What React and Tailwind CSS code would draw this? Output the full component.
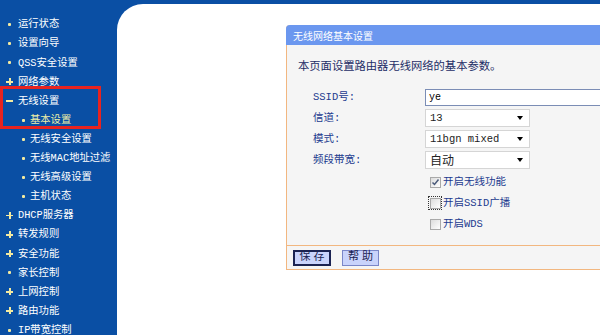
import React from 'react';

const menu = [
  { label: '运行状态', mark: 'dot' },
  { label: '设置向导', mark: 'dot' },
  { label: 'QSS安全设置', mark: 'dot' },
  { label: '网络参数', mark: 'plus' },
  { label: '无线设置', mark: 'minus' },
  { label: '基本设置', mark: 'dot', sub: true, active: true },
  { label: '无线安全设置', mark: 'dot', sub: true },
  { label: '无线MAC地址过滤', mark: 'dot', sub: true },
  { label: '无线高级设置', mark: 'dot', sub: true },
  { label: '主机状态', mark: 'dot', sub: true },
  { label: 'DHCP服务器', mark: 'plus' },
  { label: '转发规则', mark: 'plus' },
  { label: '安全功能', mark: 'plus' },
  { label: '家长控制', mark: 'dot' },
  { label: '上网控制', mark: 'plus' },
  { label: '路由功能', mark: 'plus' },
  { label: 'IP带宽控制', mark: 'dot' },
];

const Mark = ({ type }) => {
  if (type === 'plus')
    return (
      <span className="relative w-[7px] h-[7px] shrink-0">
        <span className="absolute left-0 top-[3px] w-[7px] h-[1.5px] bg-[#f3eaa0]" />
        <span className="absolute left-[3px] top-0 w-[1.5px] h-[7px] bg-[#f3eaa0]" />
      </span>
    );
  if (type === 'minus')
    return <span className="w-[7px] h-[2px] bg-[#f3eaa0] shrink-0" />;
  return <span className="w-[3px] h-[3px] mx-[2px] rounded-[1px] bg-[#f3eaa0] shrink-0" />;
};

const Select = ({ value }) => (
  <div className="w-[105px] h-[18px] bg-white border border-[#d5d5d5] flex items-center justify-between pl-[4px] pr-[6px]">
    <span className="text-[10.5px] text-[#222]">{value}</span>
    <span className="w-0 h-0 border-l-[3.5px] border-r-[3.5px] border-t-[4px] border-l-transparent border-r-transparent border-t-black" />
  </div>
);

const Check = ({ checked, focus, label }) => (
  <div className="flex items-center h-[21px]">
    <span className={`flex items-center justify-center w-[14px] h-[14px] ${focus ? 'outline outline-1 outline-dotted outline-[#333] -outline-offset-1' : ''}`}>
      <span className="w-[11px] h-[11px] border border-[#a9a9a9] bg-gradient-to-br from-[#dcdcdc] to-white flex items-center justify-center">
        {checked && (
          <svg width="9" height="9" viewBox="0 0 9 9">
            <path d="M1.5 4.5 L3.5 6.5 L7.5 1.5" fill="none" stroke="#4a5a7a" strokeWidth="1.5" />
          </svg>
        )}
      </span>
    </span>
    <span className="ml-[1px] text-[10.5px] text-[#1c3b8f]">{label}</span>
  </div>
);

export default function App() {
  return (
    <div
      className="w-[600px] h-[335px] overflow-hidden flex bg-[#0a4fa4]"
      style={{ fontFamily: '"Liberation Mono", "Noto Sans CJK SC", monospace' }}
    >
      <div className="relative w-[117px] shrink-0 pt-[15px]">
        {menu.map((m) => (
          <div
            key={m.label}
            className={`flex items-center h-[19.1px] ${m.sub ? 'pl-[20px] gap-[3px]' : 'pl-[6px] gap-[5px]'}`}
          >
            <Mark type={m.mark} />
            <span
              className={`text-[10.3px] leading-none whitespace-nowrap ${m.active ? 'text-[#eef0a8]' : 'text-white'}`}
            >
              {m.label}
            </span>
          </div>
        ))}
        <div className="absolute left-0 top-[86px] w-[101px] h-[43px] border-[3px] border-[#e8231f]" />
      </div>

      <div className="flex-1 mt-[4px] bg-white rounded-tl-[26px] pl-[169px] pt-[21px]">
        <div className="w-[340px] h-[245px] border border-[#f2b780] border-t-0 rounded-tl-[4px] bg-[#f5f5f5] flex flex-col">
          <div
            className="h-[20px] -mx-px bg-[#6b97ef] rounded-tl-[4px] flex items-center pl-[7px] text-[10px] text-white"
            style={{ fontFamily: '"Noto Sans CJK SC", sans-serif' }}
          >
            无线网络基本设置
          </div>
          <div className="h-[200px] flex flex-col">
            <div
              className="pl-[11px] pt-[12px] text-[11.3px] text-[#1d2d66]"
              style={{ fontFamily: '"Noto Sans CJK SC", sans-serif' }}
            >
              本页面设置路由器无线网络的基本参数。
            </div>
            <div className="flex mt-[13px] pl-[26px]">
              <div className="w-[118px] flex flex-col text-[10.5px] text-[#1c3b8f]">
                <div className="h-[21px] flex items-center">SSID号:</div>
                <div className="h-[21px] flex items-center">信道:</div>
                <div className="h-[21px] flex items-center">模式:</div>
                <div className="h-[21px] flex items-center">频段带宽:</div>
              </div>
              <div className="flex flex-col">
                <div className="h-[21px] flex items-center">
                  <div className="w-[200px] h-[17px] bg-white border border-[#7b8db5] flex items-center pl-[3px] text-[10px] text-black">
                    ye
                  </div>
                </div>
                <div className="h-[21px] flex items-center"><Select value="13" /></div>
                <div className="h-[21px] flex items-center"><Select value="11bgn mixed" /></div>
                <div className="h-[21px] flex items-center">
                  <Select value={<span className="text-[12px]" style={{ fontFamily: '"Noto Sans CJK SC", sans-serif' }}>自动</span>} />
                </div>
                <div className="pl-[3px] mt-[1px]">
                  <Check checked label="开启无线功能" />
                  <Check focus label="开启SSID广播" />
                  <Check label="开启WDS" />
                </div>
              </div>
            </div>
          </div>
          <div className="h-[24px] border-t border-[#f2b780] flex items-center pl-[6px] gap-[11px]">
            <button className="w-[38px] h-[16px] bg-[#c9d3fb] border-2 border-[#1b2352] text-[11px] leading-none text-[#1b2352] tracking-[3px] pl-[3px]">
              保存
            </button>
            <button className="w-[37px] h-[16px] bg-[#c9d3fb] border border-[#7a86c8] text-[11px] leading-none text-[#1b2352] tracking-[3px] pl-[3px]">
              帮助
            </button>
          </div>
        </div>
      </div>
    </div>
  );
}
